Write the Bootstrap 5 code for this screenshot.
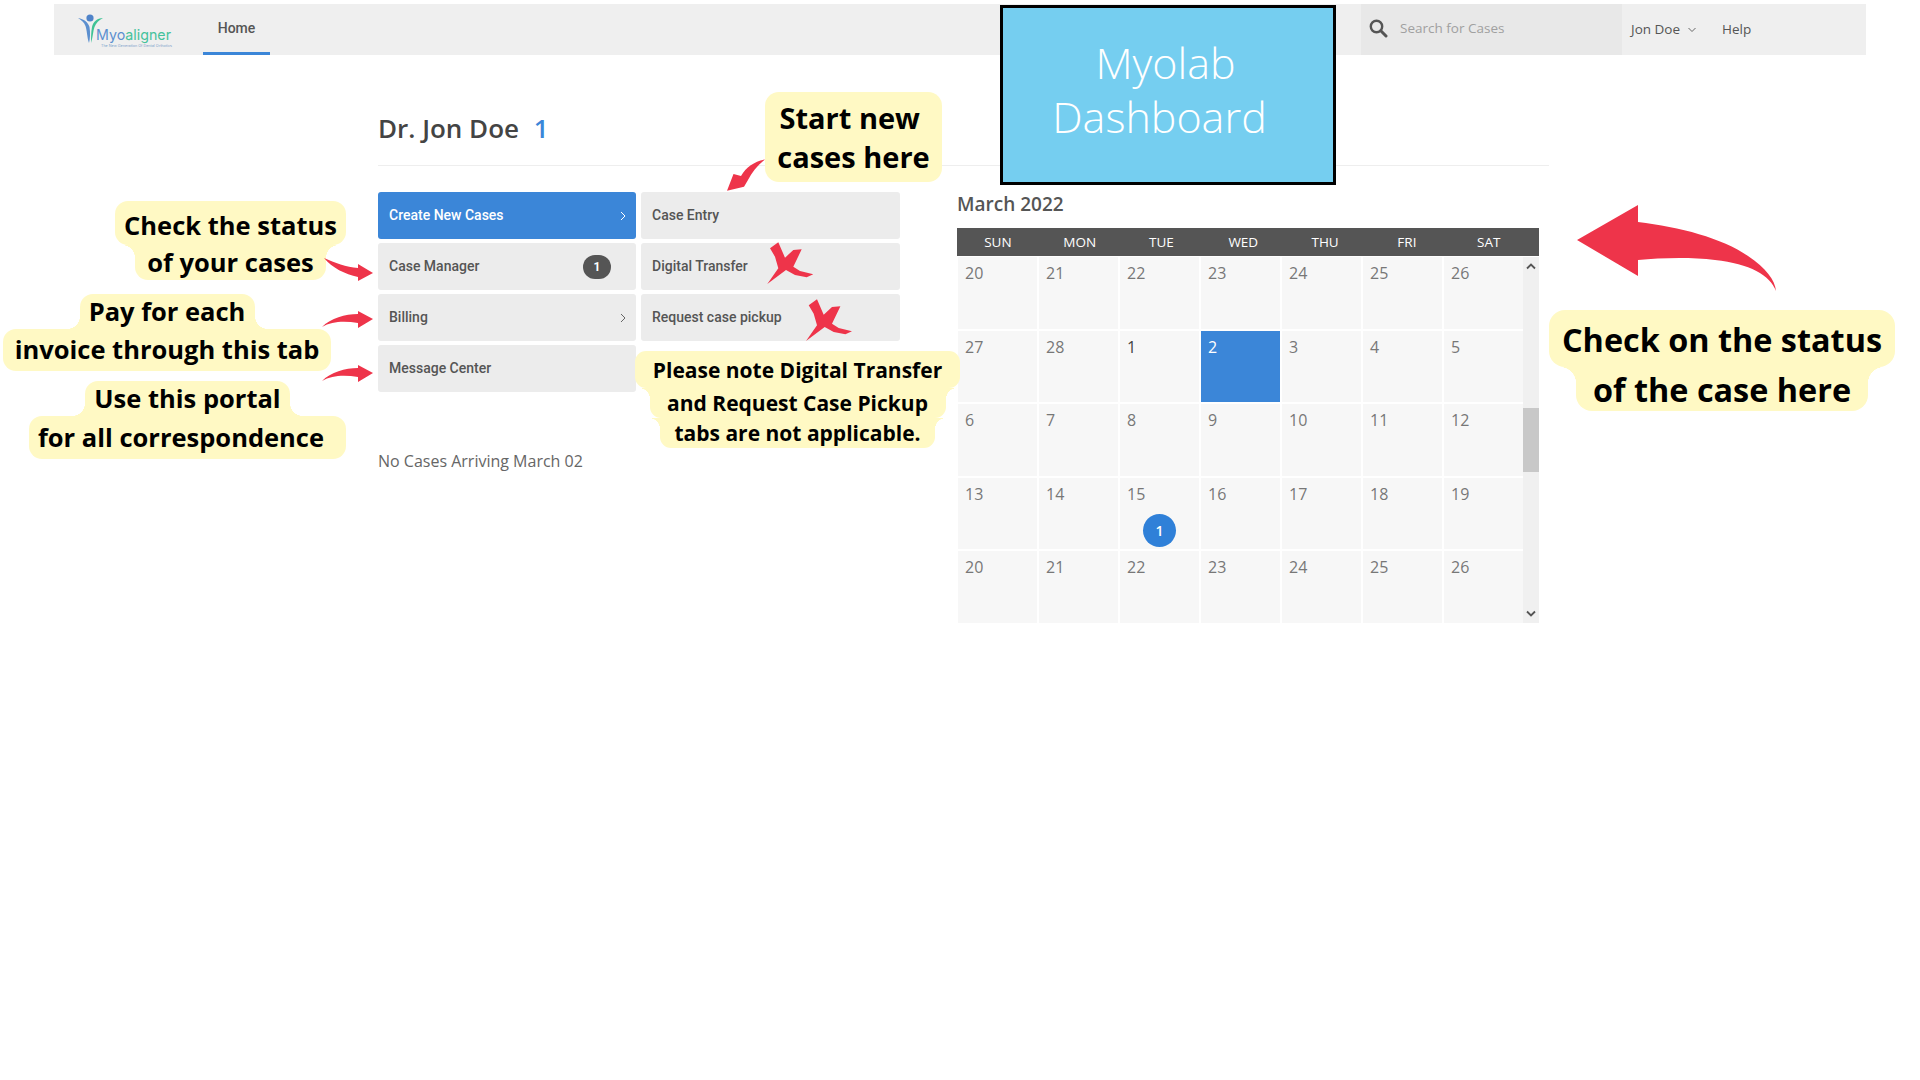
<!DOCTYPE html>
<html lang="en">

<head>
    <meta charset="UTF-8">
    <meta name="viewport" content="width=device-width, initial-scale=1.0">
    <title>Myolab Dashboard</title>
    <link href="https://cdn.jsdelivr.net/npm/bootstrap@5.3.3/dist/css/bootstrap.min.css" rel="stylesheet">
    <style>
        body {
            background-color: #fff;
            font-family: "Open Sans", sans-serif;
            color: #555;
            position: relative;
            height: 1080px;
            overflow: hidden;
        }

        /* top bar */
        .top-bar {
            margin: 4px 54px 0;
            height: 51px;
            background-color: #efefef;
            padding: 0;
            flex-wrap: nowrap;
        }

        .logo-box {
            width: 149px;
            padding-left: 24px;
        }

        .home-link {
            width: 67px;
            height: 51px;
            line-height: 48px;
            padding: 0;
            text-align: center;
            font-family: Roboto, sans-serif;
            font-weight: 500;
            font-size: 14px;
            color: #555;
            border-bottom: 3px solid #3b86d8;
        }

        .search-box {
            margin-left: 1091px;
            width: 261px;
            height: 51px;
            background-color: #e8e8e8;
            padding: 0 0 3px 8px;
            font-size: 13.5px;
            color: #a0a0a0;
            gap: 12px;
        }

        .top-item {
            font-size: 13.5px;
            color: #555;
        }

        .user-item {
            margin-left: 9px;
            gap: 8px;
        }

        .help-item {
            margin-left: 26px;
        }

        /* page content */
        .page-body {
            margin-left: 378px;
            width: 1171px;
        }

        .doctor-title {
            height: 111px;
            padding-top: 53px;
            margin: 0;
            border-bottom: 1px solid #eee;
            font-size: 26px;
            line-height: 40px;
            font-weight: 600;
            color: #444;
        }

        .doctor-title span {
            color: #3b86d8;
            margin-left: 8px;
        }

        .content-split {
            gap: 57px;
            padding-top: 26px;
        }

        .tile-grid {
            display: grid;
            grid-template-columns: 258px 259px;
            gap: 4px 5px;
            width: 522px;
        }

        .tile {
            height: 47px;
            padding: 0 10px 0 11px;
            background-color: #ececec;
            border-radius: 3px;
            font-family: Roboto, sans-serif;
            font-weight: 500;
            font-size: 14px;
            color: #555;
        }

        .tile-active {
            background-color: #3b86d8;
            color: #fff;
        }

        .tile-count {
            background-color: #555;
            width: 28px;
            height: 24px;
            margin-right: 15px;
            padding: 6px 0;
            font-size: 12px;
        }

        .arriving-text {
            margin: 57px 0 0;
            font-size: 16px;
            line-height: 24px;
            color: #666;
        }

        /* calendar */
        .calendar-box {
            width: 582px;
            margin-top: -1px;
        }

        .month-title {
            margin: 0;
            height: 37px;
            font-size: 19px;
            line-height: 26px;
            font-weight: 600;
            color: #555;
        }

        .week-head {
            display: grid;
            grid-template-columns: repeat(7, 81.8px);
            height: 28px;
            line-height: 28px;
            background-color: #555;
            color: #fff;
            font-size: 13.5px;
            text-align: center;
        }

        .month-wrap {
            padding-top: 1px;
        }

        .month-grid {
            display: grid;
            grid-template-columns: repeat(7, 79px);
            grid-auto-rows: 71.6px;
            gap: 2px;
            width: 566px;
            padding-left: 1px;
        }

        .day-cell {
            position: relative;
            background-color: #f7f7f7;
            padding: 4px 7px;
            font-size: 16px;
            line-height: 24px;
            color: #777;
        }

        .day-dark {
            color: #444;
        }

        .day-today {
            background-color: #3b86d8;
            color: #fff;
        }

        .day-count {
            position: absolute;
            left: 23px;
            top: 36px;
            width: 33px;
            height: 33px;
            line-height: 33px;
            border-radius: 50%;
            background-color: #2f80d8;
            color: #fff;
            font-size: 14px;
            font-weight: 600;
            text-align: center;
        }

        .scroll-rail {
            position: relative;
            width: 16px;
            height: 366px;
            background-color: #f0f0f0;
        }

        .scroll-thumb {
            position: absolute;
            left: 0;
            top: 151px;
            width: 16px;
            height: 64px;
            background-color: #c8c8c8;
        }

        .scroll-arrow {
            position: absolute;
            left: 3px;
        }

        /* over the page: the title box, the notes, the arrows */
        .title-panel {
            position: absolute;
            left: 1000px;
            top: 5px;
            width: 336px;
            height: 180px;
            background-color: #75cef0;
            border: 3px solid #000;
            padding-top: 28px;
            color: #fff;
            font-size: 43px;
            line-height: 54px;
            font-weight: 300;
        }

        .title-line-one {
            width: 325px;
            text-align: center;
        }

        .title-line-two {
            width: 313px;
            text-align: center;
        }

        .note {
            position: absolute;
            color: #000;
            font-weight: 700;
            white-space: nowrap;
        }

        .note-line {
            position: relative;
            background-color: #fff9c4;
            border-radius: var(--r);
            text-align: center;
        }

        .under-wide {
            border-top-left-radius: 0;
            border-top-right-radius: 0;
        }

        .over-wide {
            border-bottom-left-radius: 0;
            border-bottom-right-radius: 0;
        }

        .under-wide::before,
        .under-wide::after,
        .over-wide::before,
        .over-wide::after {
            content: "";
            position: absolute;
            width: var(--r);
            height: var(--r);
        }

        .under-wide::before,
        .under-wide::after {
            top: 0;
        }

        .over-wide::before,
        .over-wide::after {
            bottom: 0;
        }

        .under-wide::before,
        .over-wide::before {
            right: 100%;
        }

        .under-wide::after,
        .over-wide::after {
            left: 100%;
        }

        .under-wide::before {
            background: radial-gradient(circle at 0 100%, transparent 70%, #fff9c4 71%);
        }

        .under-wide::after {
            background: radial-gradient(circle at 100% 100%, transparent 70%, #fff9c4 71%);
        }

        .over-wide::before {
            background: radial-gradient(circle at 0 0, transparent 70%, #fff9c4 71%);
        }

        .over-wide::after {
            background: radial-gradient(circle at 100% 0, transparent 70%, #fff9c4 71%);
        }

        .note-new {
            left: 765px;
            top: 92px;
            --r: 14px;
            font-size: 29px;
            line-height: 39px;
        }

        .note-new .note-line {
            width: 177px;
            padding: 6px 0;
        }

        .note-status,
        .note-pay,
        .note-portal {
            --r: 13px;
            font-size: 25.5px;
            line-height: 35px;
        }

        .note-status {
            left: 115px;
            top: 201px;
        }

        .note-pay {
            left: 3px;
            top: 294px;
        }

        .note-portal {
            left: 29px;
            top: 381px;
        }

        .note-pickup {
            left: 635px;
            top: 351px;
            --r: 11px;
            font-size: 21px;
            line-height: 30px;
        }

        .note-case {
            left: 1549px;
            top: 310px;
            --r: 16px;
            font-size: 32.4px;
            line-height: 44px;
        }

        .line-231 { width: 231px; padding-top: 7px; padding-bottom: 2px; }
        .line-191 { width: 191px; }
        .line-175 { width: 175px; }
        .line-328 { width: 328px; padding-top: 3px; padding-bottom: 4px; }
        .line-205 { width: 205px; }
        .line-317 { width: 317px; padding-top: 4px; padding-bottom: 4px; padding-right: 13px; }
        .line-325 { width: 325px; padding-top: 4px; padding-bottom: 3px; }
        .line-296 { width: 296px; }
        .line-275 { width: 275px; }
        .line-346 { width: 346px; padding-top: 7px; padding-bottom: 6px; }
        .line-292 { width: 292px; }

        .arrow-layer {
            position: absolute;
            left: 0;
            top: 0;
            width: 1920px;
            height: 1080px;
            pointer-events: none;
        }
    </style>
</head>

<body>
    <!-- Navigation Bar -->
    <nav class="navbar navbar-expand top-bar">
        <div class="logo-box d-flex align-items-center">
            <svg width="110" height="40" viewBox="0 0 110 40" aria-label="Myoaligner logo">
                <circle cx="12" cy="8" r="3.6" fill="#4f83c9" />
                <path d="M0 8C6 9 10 12 11.500 17C12.500 23 12 29 11 33C9 27 9 20 7.500 16C6 12 3 10 0 8Z" fill="#5b8fcf" />
                <path d="M25 8C19 8 15 12 14 17C13 22 13 28 13 33C15 27 15 21 16.500 17C18 13 21 10 25 8Z" fill="#3fc295" />
                <text x="18" y="30" font-family="Inter, sans-serif" font-size="14.500" textLength="75" lengthAdjust="spacingAndGlyphs"><tspan fill="#5b8fcf">Myo</tspan><tspan fill="#45c29c">aligner</tspan></text>
                <text x="23" y="37" font-family="Inter, sans-serif" font-size="3.500" fill="#7d9fca" textLength="71" lengthAdjust="spacingAndGlyphs">The New Generation Of Dental Orthotics</text>
            </svg>
        </div>
        <a class="nav-link home-link" href="#home">Home</a>
        <div class="search-box d-flex align-items-center">
            <svg width="19" height="19" viewBox="0 0 19 19">
                <circle cx="7.500" cy="7.500" r="5.700" fill="none" stroke="#555" stroke-width="2.400" />
                <path d="M11.800 11.800L17 17" stroke="#555" stroke-width="3" stroke-linecap="round" />
            </svg>
            <span>Search for Cases</span>
        </div>
        <div class="top-item user-item d-flex align-items-center">
            <span>Jon Doe</span>
            <svg width="8" height="6" viewBox="0 0 8 6">
                <path d="M0.500 1L4 4.500L7.500 1" fill="none" stroke="#666" stroke-width="1" />
            </svg>
        </div>
        <div class="top-item help-item">Help</div>
    </nav>

    <!-- Dashboard -->
    <div class="page-body">
        <h1 class="doctor-title">Dr. Jon Doe <span>1</span></h1>

        <div class="content-split d-flex">
            <div>
                <div class="tile-grid">
                    <div class="tile tile-active d-flex align-items-center justify-content-between">
                        Create New Cases
                        <svg width="6" height="10" viewBox="0 0 6 10"><path d="M1 1L5 5L1 9" fill="none" stroke="#fff" stroke-width="1" /></svg>
                    </div>
                    <div class="tile d-flex align-items-center">Case Entry</div>
                    <div class="tile d-flex align-items-center justify-content-between">
                        Case Manager
                        <span class="badge rounded-pill tile-count">1</span>
                    </div>
                    <div class="tile d-flex align-items-center">Digital Transfer</div>
                    <div class="tile d-flex align-items-center justify-content-between">
                        Billing
                        <svg width="6" height="10" viewBox="0 0 6 10"><path d="M1 1L5 5L1 9" fill="none" stroke="#666" stroke-width="1" /></svg>
                    </div>
                    <div class="tile d-flex align-items-center">Request case pickup</div>
                    <div class="tile d-flex align-items-center">Message Center</div>
                </div>
                <p class="arriving-text">No Cases Arriving March 02</p>
            </div>

            <div class="calendar-box">
                <h2 class="month-title">March 2022</h2>
                <div class="week-head">
                    <div>SUN</div><div>MON</div><div>TUE</div><div>WED</div><div>THU</div><div>FRI</div><div>SAT</div>
                </div>
                <div class="month-wrap d-flex">
                    <div class="month-grid">
                        <div class="day-cell">20</div><div class="day-cell">21</div><div class="day-cell">22</div><div class="day-cell">23</div><div class="day-cell">24</div><div class="day-cell">25</div><div class="day-cell">26</div>
                        <div class="day-cell">27</div><div class="day-cell">28</div><div class="day-cell day-dark">1</div><div class="day-cell day-today">2</div><div class="day-cell">3</div><div class="day-cell">4</div><div class="day-cell">5</div>
                        <div class="day-cell">6</div><div class="day-cell">7</div><div class="day-cell">8</div><div class="day-cell">9</div><div class="day-cell">10</div><div class="day-cell">11</div><div class="day-cell">12</div>
                        <div class="day-cell">13</div><div class="day-cell">14</div><div class="day-cell">15<span class="day-count">1</span></div><div class="day-cell">16</div><div class="day-cell">17</div><div class="day-cell">18</div><div class="day-cell">19</div>
                        <div class="day-cell">20</div><div class="day-cell">21</div><div class="day-cell">22</div><div class="day-cell">23</div><div class="day-cell">24</div><div class="day-cell">25</div><div class="day-cell">26</div>
                    </div>
                    <div class="scroll-rail">
                        <div class="scroll-thumb"></div>
                        <svg class="scroll-arrow" style="top:6px" width="10" height="7" viewBox="0 0 10 7"><path d="M1 5.500L5 1.500L9 5.500" fill="none" stroke="#555" stroke-width="1.800" /></svg>
                        <svg class="scroll-arrow" style="top:353px" width="10" height="7" viewBox="0 0 10 7"><path d="M1 1.500L5 5.500L9 1.500" fill="none" stroke="#555" stroke-width="1.800" /></svg>
                    </div>
                </div>
            </div>
        </div>
    </div>

    <!-- Title box over the top bar -->
    <div class="title-panel">
        <div class="title-line-one">Myolab</div>
        <div class="title-line-two">Dashboard</div>
    </div>

    <!-- Notes -->
    <div class="note note-new d-flex flex-column align-items-center">
        <div class="note-line">Start new&nbsp;<br>cases here</div>
    </div>
    <div class="note note-status d-flex flex-column align-items-center">
        <div class="note-line line-231">Check the status</div>
        <div class="note-line line-191 under-wide">of your cases</div>
    </div>
    <div class="note note-pay d-flex flex-column align-items-center">
        <div class="note-line line-175 over-wide">Pay for each</div>
        <div class="note-line line-328">invoice through this tab</div>
    </div>
    <div class="note note-portal d-flex flex-column align-items-center">
        <div class="note-line line-205 over-wide">Use this portal</div>
        <div class="note-line line-317">for all correspondence</div>
    </div>
    <div class="note note-pickup d-flex flex-column align-items-center">
        <div class="note-line line-325">Please note Digital Transfer</div>
        <div class="note-line line-296 under-wide">and Request Case Pickup</div>
        <div class="note-line line-275 under-wide">tabs are not applicable.</div>
    </div>
    <div class="note note-case d-flex flex-column align-items-center">
        <div class="note-line line-346">Check on the status</div>
        <div class="note-line line-292 under-wide">of the case here</div>
    </div>

    <!-- Red arrows and crosses -->
    <svg class="arrow-layer" viewBox="0 0 1920 1080" fill="#ee344a">
        <path d="M1577 240L1638 205V222C1680 227 1722 238 1748 256C1766 268 1775 280 1776 291C1770 275 1750 264 1715 260C1690 257 1660 258 1638 260V276Z" />
        <path d="M324 258C335 263 346 267 358 268V264L373 273L358 281V277C345 274 332 268 324 258Z" />
        <path d="M322 327C331 318 345 314 358 314V311L373 319L358 328V323C345 321 332 321 322 327Z" />
        <path d="M322 381C331 372 345 368 358 368V365L373 373L358 382V377C345 375 332 375 322 381Z" />
        <path d="M765 159.500C755 161 746 167 741 176L733.500 174L727 190.700L744 186.700L748 180C752 172 758 165 765 159.500Z" />
        <path id="crossMark" d="M770 248.300L778.300 242.300L785 257.700L793.300 250L801.700 249.300L793.300 266.700L800 271L813.300 274.300L806.700 277.300L795 275L786 270L767.300 284L778.300 268.300L775 256.700Z" />
        <use href="#crossMark" x="38.700" y="57" />
    </svg>

    <script src="https://cdn.jsdelivr.net/npm/bootstrap@5.3.3/dist/js/bootstrap.bundle.min.js"></script>
</body>

</html>
